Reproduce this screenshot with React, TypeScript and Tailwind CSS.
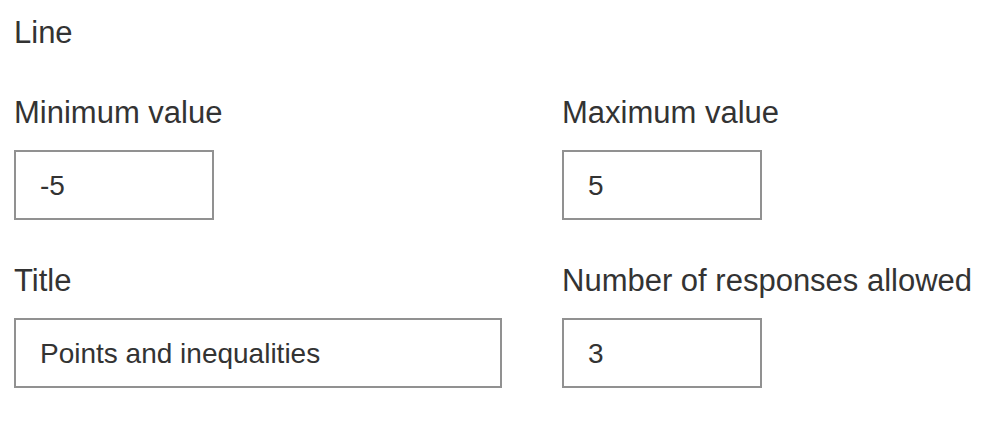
import React from 'react';

type FieldProps = {
  label: string;
  value: string;
  width: string;
};

function Field({ label, value, width }: FieldProps) {
  return (
    <label className="flex flex-col">
      <span className="text-[31px] leading-[36px] text-[#333333] whitespace-nowrap">{label}</span>
      <input
        readOnly
        value={value}
        className={`mt-[19px] h-[70px] ${width} border-2 border-[#919191] bg-white pl-[24px] pt-[1px] text-[28px] text-[#333333] outline-none`}
      />
    </label>
  );
}

export default function App() {
  return (
    <div
      className="min-h-screen bg-white pt-[15px] pl-[14px]"
      style={{ fontFamily: '"Liberation Sans", Arial, Helvetica, sans-serif' }}
    >
      <h2 className="text-[31px] leading-[36px] text-[#333333]">Line</h2>

      <div className="mt-[44px] grid grid-cols-[548px_1fr] gap-y-[43px]">
        <Field label="Minimum value" value="-5" width="w-[200px]" />
        <Field label="Maximum value" value="5" width="w-[200px]" />
        <Field label="Title" value="Points and inequalities" width="w-[488px]" />
        <Field label="Number of responses allowed" value="3" width="w-[200px]" />
      </div>
    </div>
  );
}
